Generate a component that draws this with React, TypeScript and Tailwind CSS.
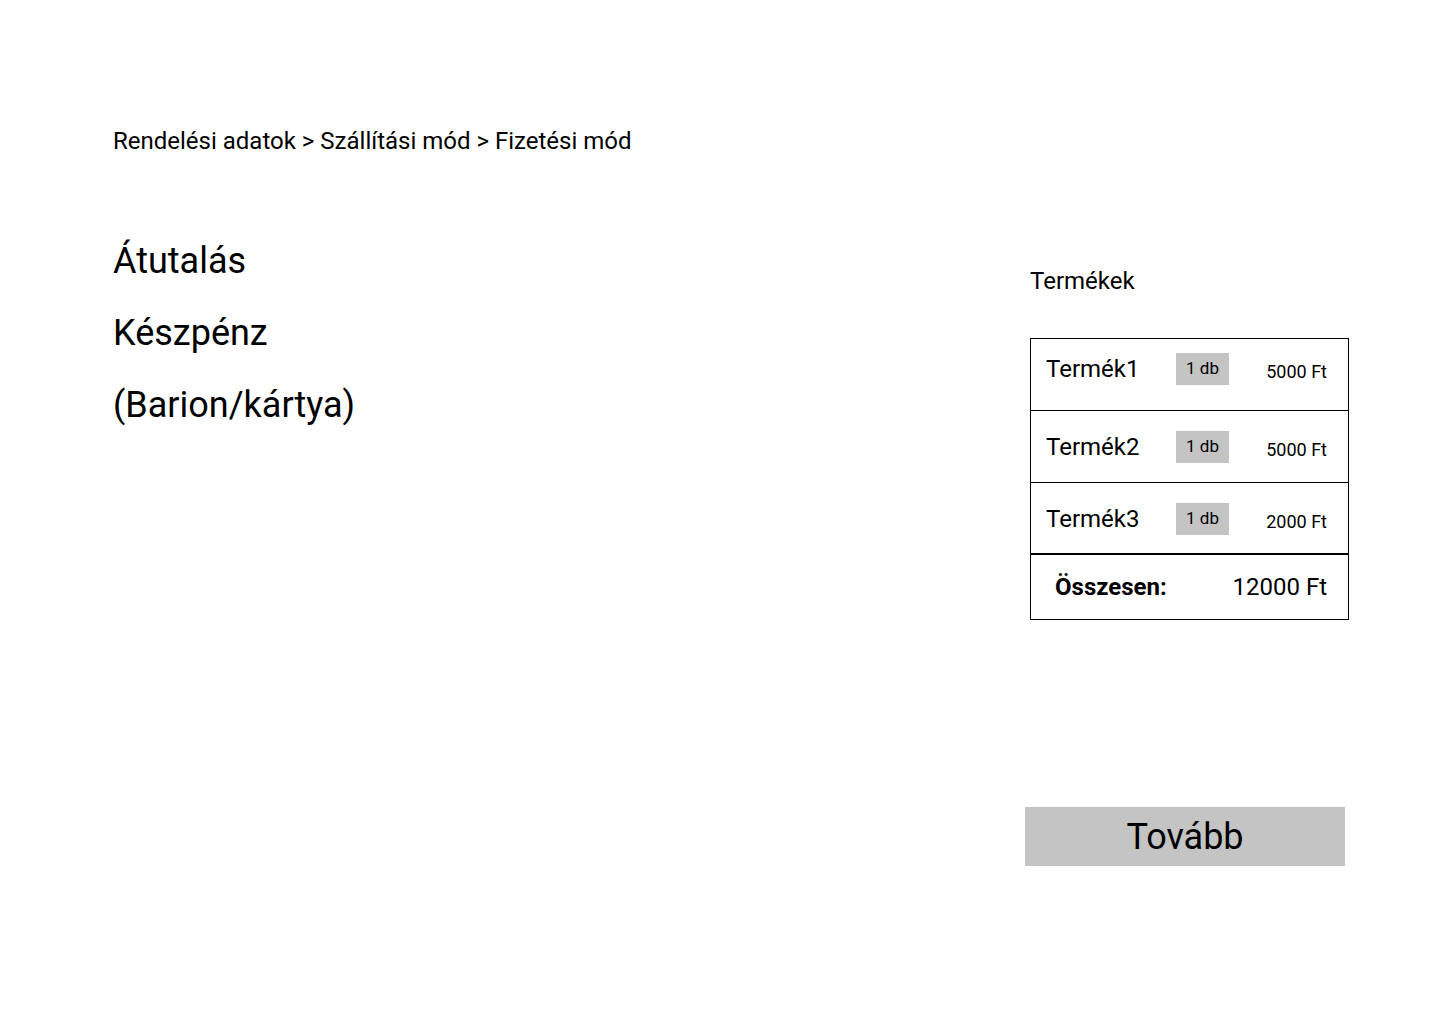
const products = [
  { name: "Termék1", qty: "1 db", price: "5000 Ft", first: true },
  { name: "Termék2", qty: "1 db", price: "5000 Ft", first: false },
  { name: "Termék3", qty: "1 db", price: "2000 Ft", first: false },
];

export default function App() {
  return (
    <div className="w-[1440px] h-[1024px] bg-white text-black font-['Roboto',sans-serif]">
      {/* Breadcrumb */}
      <div className="pt-[127px] pl-[113px] text-[24px] leading-[28px]">
        Rendelési adatok &gt; Szállítási mód &gt; Fizetési mód
      </div>

      <div className="flex mt-[84px]">
        {/* Payment options */}
        <div className="flex-1 pl-[113px] flex flex-col gap-[28px] text-[36px] leading-[44px]">
          <div>Átutalás</div>
          <div>Készpénz</div>
          <div>(Barion/kártya)</div>
        </div>

        {/* Summary */}
        <div className="w-[319px] mr-[91px] pt-[26px]">
          <div className="text-[24px] leading-[32px]">Termékek</div>

          <div className="mt-[41px] border border-black">
            {products.map((p, i) => (
              <div
                key={p.name}
                className={`flex items-start h-[72px] border-black ${i === 2 ? "border-b-2" : "border-b"} ${p.first ? "pt-0" : "pt-[6px]"}`}
              >
                <div className="w-[145px] pl-[15px] mt-[16px] text-[24px] leading-[28px]">{p.name}</div>
                <div className="mt-[14px] w-[53px] h-[32px] bg-[#c4c4c4] flex items-center justify-center text-[17px]">
                  {p.qty}
                </div>
                <div className="flex-1 pr-[21px] mt-[23px] text-right text-[18px] leading-[20px]">{p.price}</div>
              </div>
            ))}
            <div className="flex items-center justify-between h-[64px] pl-[24px] pr-[21px]">
              <span className="font-bold text-[24px]">Összesen:</span>
              <span className="text-[24px]">12000 Ft</span>
            </div>
          </div>

          <button className="mt-[187px] -ml-[5px] w-[320px] h-[59px] bg-[#c4c4c4] flex items-center justify-center text-[36px]">
            Tovább
          </button>
        </div>
      </div>
    </div>
  );
}
